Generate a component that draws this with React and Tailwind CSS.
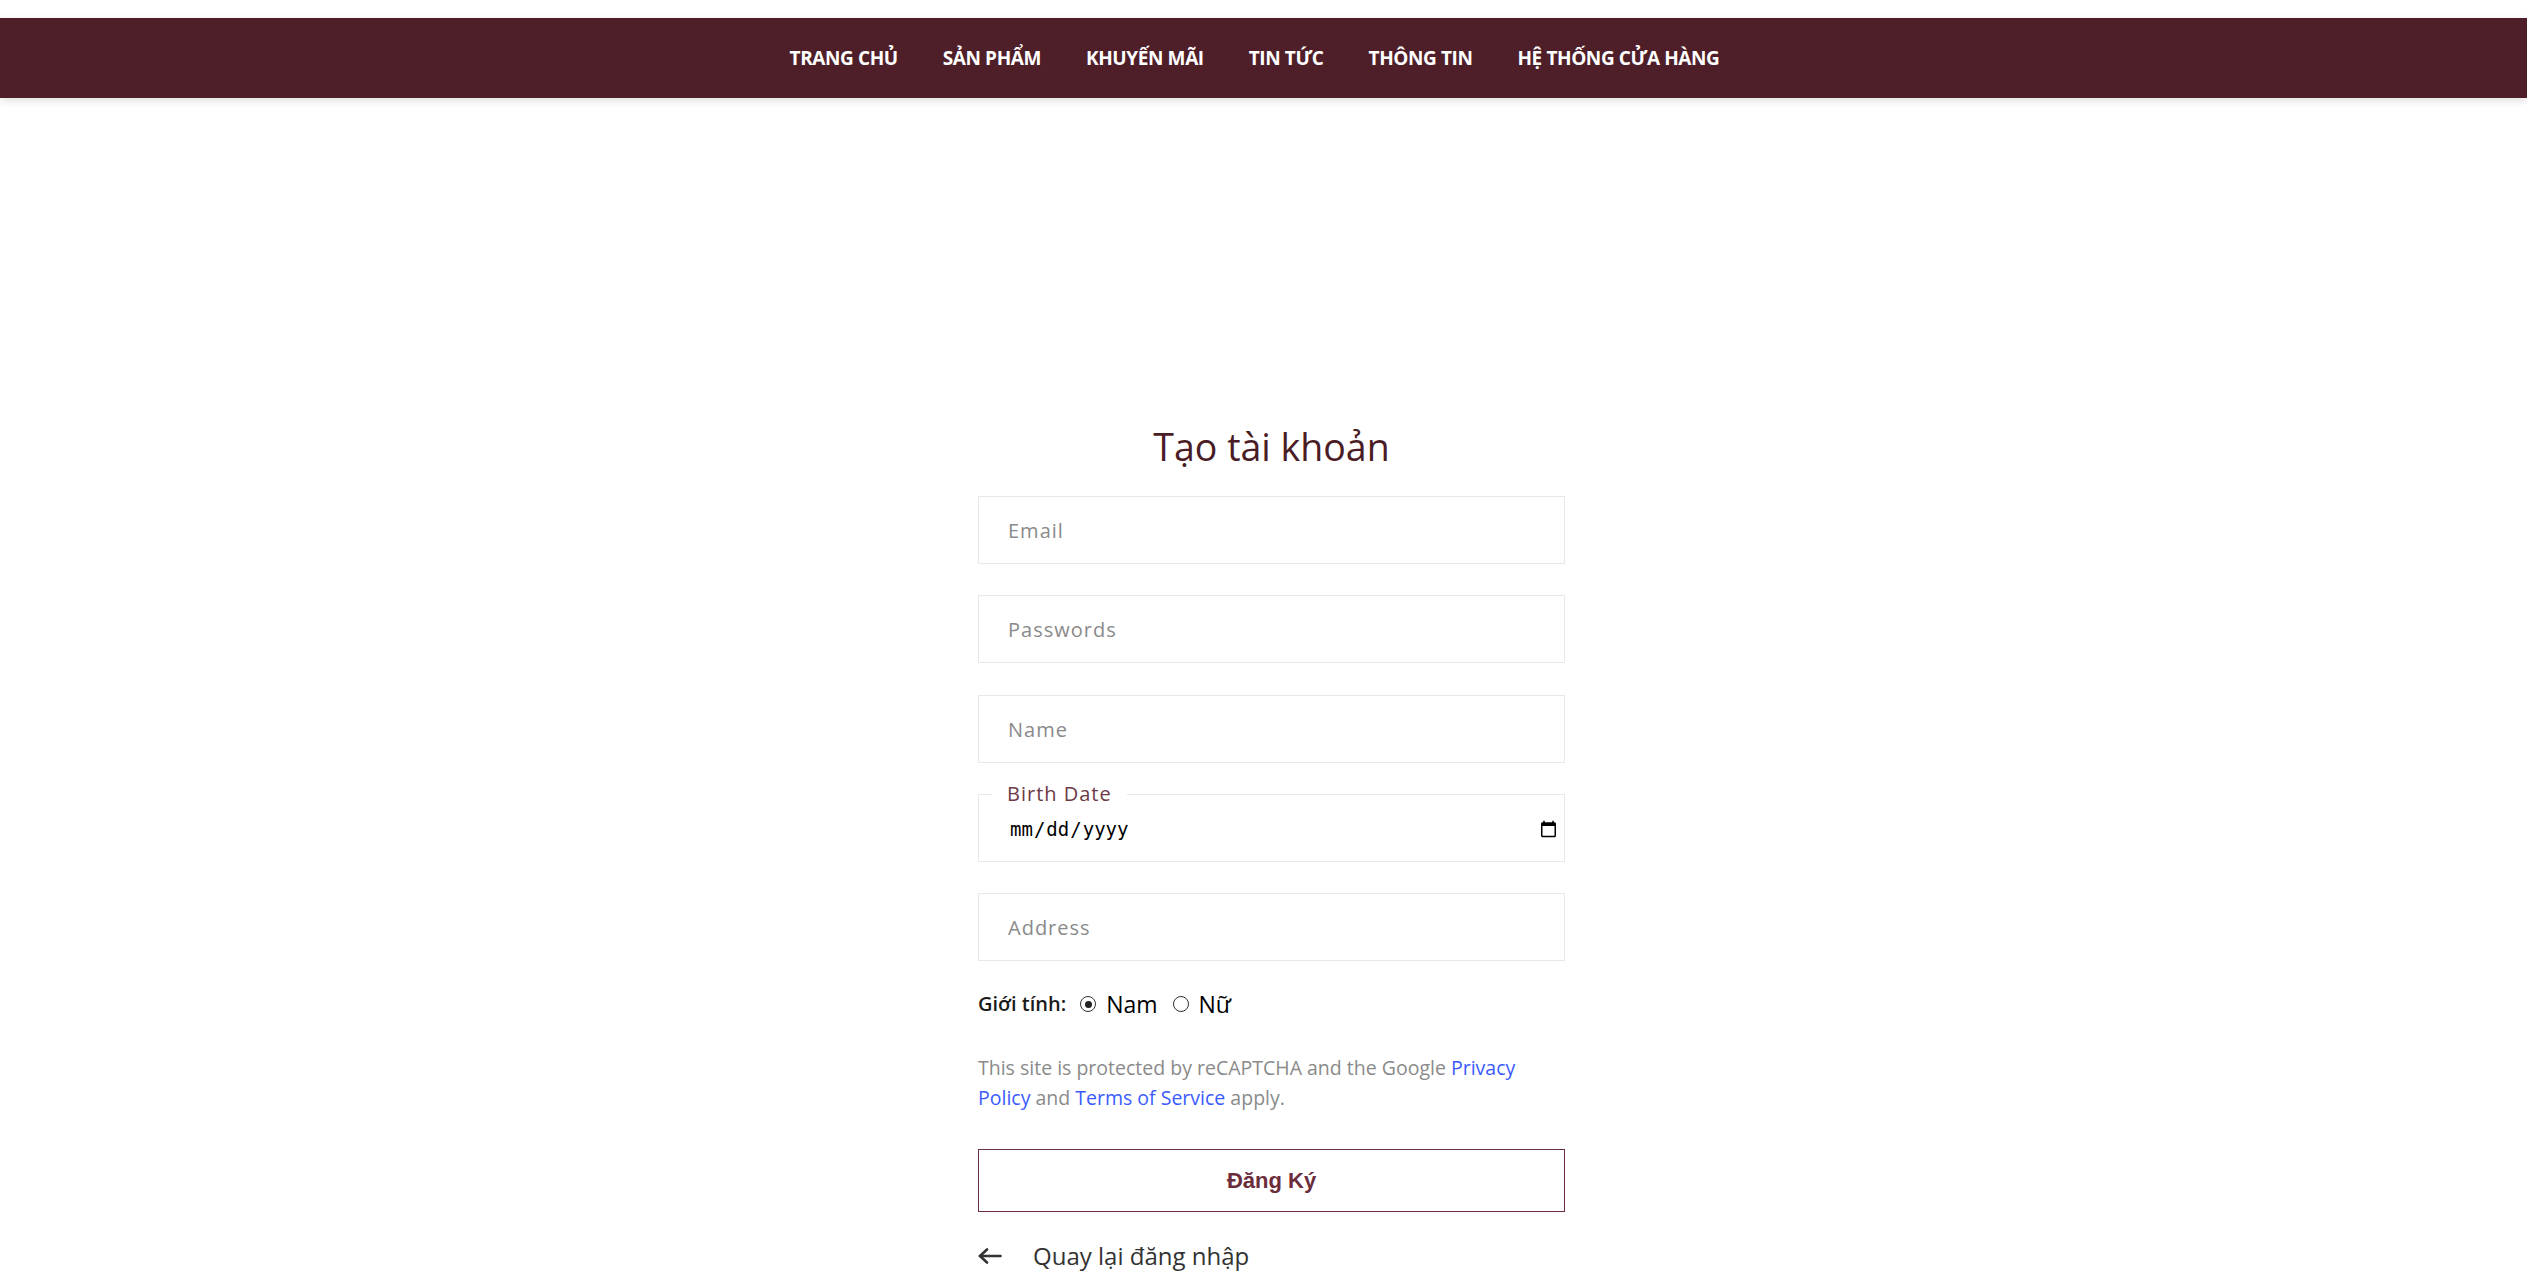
import React from "react";

const navItems = ["TRANG CHỦ", "SẢN PHẨM", "KHUYẾN MÃI", "TIN TỨC", "THÔNG TIN", "HỆ THỐNG CỬA HÀNG"];

function Radio({ checked }) {
  return (
    <span className="w-[16px] h-[16px] rounded-full border-[1.5px] border-[#333] flex items-center justify-center bg-white">
      {checked && <span className="w-[7px] h-[7px] rounded-full bg-[#222]" />}
    </span>
  );
}

export default function App() {
  const inputCls =
    "block w-full h-[68px] border border-[#e8e8e8] bg-white px-[29px] text-[20px] tracking-[1px] text-[#333] placeholder:text-[#8a8a8a] outline-none font-['Open_Sans',sans-serif]";
  return (
    <div className="min-h-screen bg-white font-['Open_Sans',sans-serif]">
      <div className="h-[18px]" />
      <nav className="h-[80px] bg-[#4f1f29] shadow-[0_3px_8px_rgba(0,0,0,0.12)] flex items-center justify-center gap-[45px] pr-[18px]">
        {navItems.map((t) => (
          <a key={t} className="text-white font-bold text-[19px] tracking-[-0.4px] leading-none whitespace-nowrap cursor-pointer">
            {t}
          </a>
        ))}
      </nav>
      <main className="flex justify-center pl-[16px]">
        <form className="w-[587px] pt-[324px]" onSubmit={(e) => e.preventDefault()}>
          <h1 className="text-center text-[37.5px] leading-[50px] font-normal text-[#4a1c25]">Tạo tài khoản</h1>
          <input className={inputCls + " mt-[24px]"} placeholder="Email" type="email" />
          <input className={inputCls + " mt-[31px]"} placeholder="Passwords" type="password" />
          <input className={inputCls + " mt-[32px]"} placeholder="Name" type="text" />
          <div className="relative mt-[31px] h-[68px] border border-[#e8e8e8]">
            <span className="absolute left-[13px] top-[-15px] bg-white px-[15px] text-[20px] leading-[27px] tracking-[1px] text-[#6b3a45]">
              Birth Date
            </span>
            <input
              type="date"
              className="absolute left-0 right-0 bottom-0 top-[12px] w-full h-[44px] pl-[30px] pr-[4px] bg-transparent text-[19px] text-black outline-none font-['DejaVu_Sans_Mono',monospace]"
            />
          </div>
          <input className={inputCls + " mt-[31px]"} placeholder="Address" type="text" />
          <div className="mt-[28px] h-[30px] flex items-center">
            <span className="text-[20px] font-semibold text-[#1a1a1a] leading-[30px]">Giới tính:</span>
            <span className="ml-[14px]"><Radio checked /></span>
            <span className="ml-[10px] text-[23px] text-black leading-[30px]">Nam</span>
            <span className="ml-[15px]"><Radio /></span>
            <span className="ml-[10px] text-[23px] text-black leading-[30px]">Nữ</span>
          </div>
          <p className="mt-[34px] text-[19.5px] leading-[30px] text-[#8a8a8a]">
            This site is protected by reCAPTCHA and the Google{" "}
            <a className="text-[#3b5bff] cursor-pointer">Privacy</a>{" "}
            <a className="text-[#3b5bff] cursor-pointer">Policy</a> and{" "}
            <a className="text-[#3b5bff] cursor-pointer">Terms of Service</a> apply.
          </p>
          <button
            type="submit"
            className="mt-[36px] block w-full h-[63px] border border-[#6d2e3e] bg-white text-[22px] font-bold text-[#6b2c3b] font-['Liberation_Sans',Arial,sans-serif]"
          >
            Đăng Ký
          </button>
          <div className="mt-[28px] h-[32px] flex items-center text-[#333]">
            <svg width="24" height="16" viewBox="0 0 24 16" fill="none" stroke="#333" strokeWidth="2.6" strokeLinecap="round" strokeLinejoin="round">
              <path d="M22.5 8H2" />
              <path d="M9 1.5 2 8l7 6.5" />
            </svg>
            <span className="ml-[31px] text-[24px] leading-[32px]">Quay lại đăng nhập</span>
          </div>
        </form>
      </main>
    </div>
  );
}
